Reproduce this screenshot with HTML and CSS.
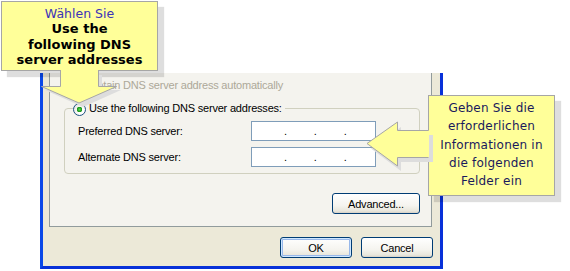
FILE: index.html
```html
<!DOCTYPE html>
<html lang="de">

<head>
    <meta charset="UTF-8">
    <meta name="viewport" content="width=device-width, initial-scale=1.0">
    <link rel="stylesheet" href="styles.css">
    <title>DNS-Einstellungen</title>
</head>

<body>
    <div class="page">
        <div class="window">
            <div class="panel">
                <div class="option disabled">
                    <span class="radio"></span>Obtain DNS server address automatically
                </div>
                <fieldset class="group">
                    <legend><span class="radio checked"></span>Use the following DNS server addresses:</legend>
                    <div class="field">
                        <label>Preferred DNS server:</label>
                        <div class="ip"><span>.</span><span>.</span><span>.</span></div>
                    </div>
                    <div class="field">
                        <label>Alternate DNS server:</label>
                        <div class="ip"><span>.</span><span>.</span><span>.</span></div>
                    </div>
                </fieldset>
                <div class="panel-actions">
                    <button class="btn btn-wide">Advanced...</button>
                </div>
            </div>
            <div class="actions">
                <button class="btn btn-default">OK</button>
                <button class="btn">Cancel</button>
            </div>
        </div>

        <!-- callout arrows -->
        <svg class="arrows" width="570" height="271" viewBox="0 0 570 271">
            <polygon class="shade" points="64,75 64,90 45,90 83,107 121,90 102,90 102,75" />
            <polygon class="fill" points="60.5,69.5 60.5,86.5 41.5,86.5 79,103 116.5,86.5 98.5,86.5 98.5,69.5" />
            <polyline class="edge" points="60.5,70 60.5,86.5 41.5,86.5 79,103 116.5,86.5 98.5,86.5 98.5,70" />

            <polygon class="shade" points="433,135 401,135 401,127 371,148.5 401,171 401,162 433,162" />
            <polygon class="fill" points="429,130.5 397.5,130.5 397.5,122 367,143.5 397.5,166 397.5,157.5 429,157.5" />
            <polyline class="edge" points="428.5,130.5 397.5,130.5 397.5,122 367,143.5 397.5,166 397.5,157.5 428.5,157.5" />
        </svg>

        <div class="callout callout-top">
            <p class="hint">Wählen Sie</p>
            <p class="strong">Use the<br>following DNS<br>server addresses</p>
        </div>

        <div class="callout callout-side">
            <p>Geben Sie die erforderlichen Informationen in die folgenden Felder ein</p>
        </div>
    </div>
</body>

</html>
```

FILE: styles.css
```css
body {
    margin: 0;
    background: #FFFFFF;
    font-family: "Liberation Sans", Arial, sans-serif;
    font-size: 11px;
    color: #000000;
}

.page {
    position: relative;
    width: 570px;
    height: 271px;
    overflow: hidden;
}

/* dialog window */
.window {
    box-sizing: border-box;
    width: 403px;
    margin: 73px 0 0 40px;
    padding: 0 7px 8px 0;
    background: #ECE9D8;
    border: 3px solid #0831D9;
    border-top: 0;
    border-left-color: #0A48E8;
    letter-spacing: -0.2px;
}

.panel {
    margin: 0 1px 0 6px;
    padding: 4px 11px 12px 0;
    background: #F4F3EE;
    border: 1px solid #919B9C;
    border-top: 0;
}

.option {
    display: flex;
    align-items: center;
    height: 16px;
    padding-left: 23px;
}

.option.disabled {
    color: #ACA899;
}

.radio {
    box-sizing: border-box;
    display: inline-block;
    width: 13px;
    height: 13px;
    margin-right: 3px;
    border: 1px solid #1C5180;
    border-radius: 50%;
    background: radial-gradient(circle at 65% 65%, #FFFFFF 30%, #DCDBD3 100%);
    vertical-align: middle;
}

.option.disabled .radio {
    border-color: #CAC8BB;
}

.radio.checked {
    background: radial-gradient(circle, #5BDD4F 0, #21A121 2px, #1F8E1F 2.6px, transparent 3px),
        radial-gradient(circle at 65% 65%, #FFFFFF 30%, #DCDBD3 100%);
}

.group {
    margin: 8px 0 0 14px;
    padding: 0 10px 6px 8px;
    border: 1px solid #D0D0BF;
    border-radius: 4px;
    min-width: 0;
}

.group legend {
    padding: 0 3px 0 0;
    line-height: 14px;
    height: 14px;
}

.field {
    display: flex;
    align-items: center;
    margin: 6px 0 0 5px;
}

.field label {
    width: 173px;
}

.ip {
    box-sizing: border-box;
    display: flex;
    gap: 27px;
    width: 125px;
    height: 20px;
    padding: 3px 0 0 32px;
    background: #FFFFFF;
    border: 1px solid #7F9DB9;
}

.panel-actions {
    display: flex;
    justify-content: flex-end;
    margin-top: 19px;
}

.actions {
    display: flex;
    justify-content: flex-end;
    gap: 9px;
    margin-top: 10px;
}

/* xp buttons */
.btn {
    box-sizing: border-box;
    width: 72px;
    height: 21px;
    padding: 0;
    font-family: "Liberation Sans", Arial, sans-serif;
    font-size: 11px;
    letter-spacing: -0.2px;
    color: #000000;
    border: 1px solid #003C74;
    border-radius: 3px;
    background: linear-gradient(#FFFFFF, #F5F4EF 60%, #E8E6DC 90%, #D6D0C5);
}

.btn-wide {
    width: 88px;
}

.btn-default {
    box-shadow: inset 0 0 0 1px #CEE7FF, inset 0 0 0 2px #98B8EA;
}

/* callouts */
.arrows {
    position: absolute;
    left: 0;
    top: 0;
    z-index: 2;
}

.arrows .shade {
    fill: #DDDDDD;
}

.arrows .fill {
    fill: #FFFF99;
}

.arrows .edge {
    fill: none;
    stroke: #A6A6A6;
    stroke-width: 1;
}

.callout {
    position: absolute;
    z-index: 1;
    box-sizing: border-box;
    background: #FFFF99;
    border: 1px solid #A6A6A6;
    box-shadow: 6px 6px 1px rgba(0, 0, 0, 0.13);
    font-family: "DejaVu Sans", Verdana, sans-serif;
    font-size: 12px;
    text-align: center;
}

.callout p {
    margin: 0;
}

.callout-top {
    left: 1px;
    top: 1px;
    width: 157px;
    height: 70px;
    padding: 5px 6px 0;
}

.callout-top .hint {
    color: #3B33B8;
    font-size: 12.5px;
    line-height: 14px;
}

.callout-top .strong {
    font-size: 13px;
    font-weight: bold;
    line-height: 15.5px;
}

.callout-side {
    left: 428px;
    top: 95px;
    width: 127px;
    height: 101px;
    padding: 3px 6px 0;
    color: #1A1A5C;
    line-height: 18.3px;
    letter-spacing: 0.2px;
}
```
